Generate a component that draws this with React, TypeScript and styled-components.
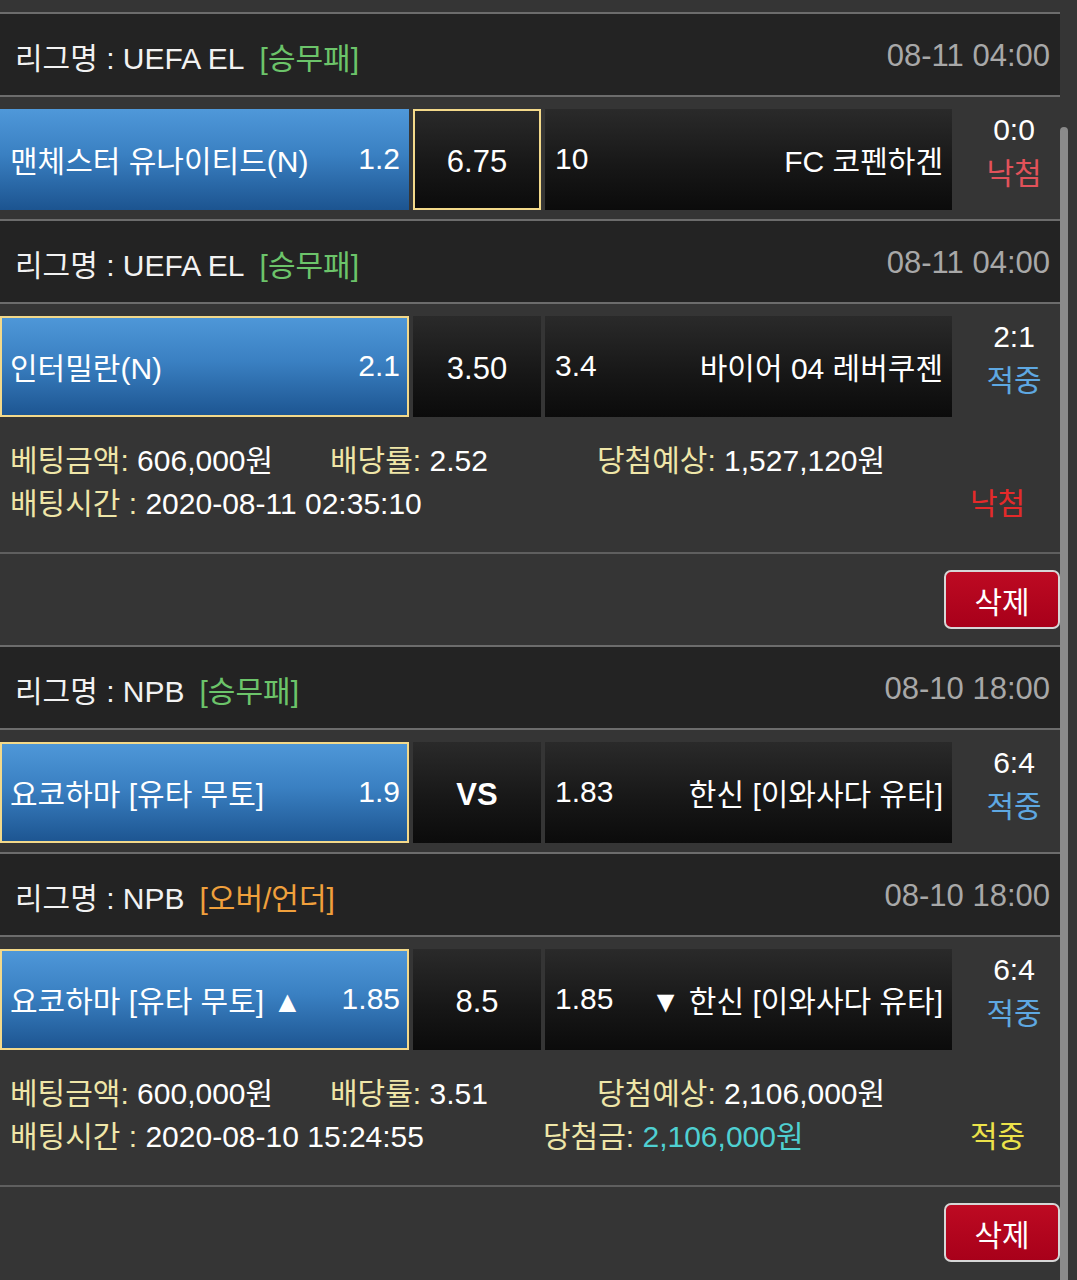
import styled, { createGlobalStyle } from 'styled-components';

type Pick = 'home' | 'mid' | 'away';

interface Match {
  league: string;
  market: string;
  marketTone: 'green' | 'orange';
  date: string;
  home: string;
  homeOdds: string;
  mid: string;
  midBold?: boolean;
  awayOdds: string;
  away: string;
  pick: Pick;
  score: string;
  result: '낙첨' | '적중';
}

interface Bet {
  matches: Match[];
  amount: string;
  rate: string;
  expected: string;
  time: string;
  won?: string;
  status: '낙첨' | '적중';
}

const bets: Bet[] = [
  {
    matches: [
      {
        league: 'UEFA EL',
        market: '[승무패]',
        marketTone: 'green',
        date: '08-11 04:00',
        home: '맨체스터 유나이티드(N)',
        homeOdds: '1.2',
        mid: '6.75',
        awayOdds: '10',
        away: 'FC 코펜하겐',
        pick: 'mid',
        score: '0:0',
        result: '낙첨',
      },
      {
        league: 'UEFA EL',
        market: '[승무패]',
        marketTone: 'green',
        date: '08-11 04:00',
        home: '인터밀란(N)',
        homeOdds: '2.1',
        mid: '3.50',
        awayOdds: '3.4',
        away: '바이어 04 레버쿠젠',
        pick: 'home',
        score: '2:1',
        result: '적중',
      },
    ],
    amount: '606,000원',
    rate: '2.52',
    expected: '1,527,120원',
    time: '2020-08-11 02:35:10',
    status: '낙첨',
  },
  {
    matches: [
      {
        league: 'NPB',
        market: '[승무패]',
        marketTone: 'green',
        date: '08-10 18:00',
        home: '요코하마 [유타 무토]',
        homeOdds: '1.9',
        mid: 'VS',
        midBold: true,
        awayOdds: '1.83',
        away: '한신 [이와사다 유타]',
        pick: 'home',
        score: '6:4',
        result: '적중',
      },
      {
        league: 'NPB',
        market: '[오버/언더]',
        marketTone: 'orange',
        date: '08-10 18:00',
        home: '요코하마 [유타 무토] ▲',
        homeOdds: '1.85',
        mid: '8.5',
        awayOdds: '1.85',
        away: '▼ 한신 [이와사다 유타]',
        pick: 'home',
        score: '6:4',
        result: '적중',
      },
    ],
    amount: '600,000원',
    rate: '3.51',
    expected: '2,106,000원',
    time: '2020-08-10 15:24:55',
    won: '2,106,000원',
    status: '적중',
  },
];

export default function App() {
  return (
    <>
      <GlobalStyle />
      <Page>
        {bets.map((bet, i) => (
          <Card key={i}>
            {bet.matches.map((m, j) => (
              <div key={j}>
                <LeagueHeader>
                  <LeagueName>
                    리그명 : {m.league}
                    <Market $tone={m.marketTone}>{m.market}</Market>
                  </LeagueName>
                  <MatchDate>{m.date}</MatchDate>
                </LeagueHeader>
                <MatchRow>
                  <HomeCell $selected={m.pick === 'home'}>
                    <span>{m.home}</span>
                    <span>{m.homeOdds}</span>
                  </HomeCell>
                  <MidCell $selected={m.pick === 'mid'} $bold={m.midBold}>
                    {m.mid}
                  </MidCell>
                  <AwayCell $selected={m.pick === 'away'}>
                    <span>{m.awayOdds}</span>
                    <span>{m.away}</span>
                  </AwayCell>
                  <Score>
                    <div>{m.score}</div>
                    <Result $win={m.result === '적중'}>{m.result}</Result>
                  </Score>
                </MatchRow>
              </div>
            ))}
            <Info>
              <InfoLine>
                <Field $w={320}>
                  <Label>베팅금액:</Label> {bet.amount}
                </Field>
                <Field $w={267}>
                  <Label>배당률:</Label> {bet.rate}
                </Field>
                <Field>
                  <Label>당첨예상:</Label> {bet.expected}
                </Field>
              </InfoLine>
              <InfoLine>
                <Field $w={533}>
                  <Label>배팅시간 :</Label> {bet.time}
                </Field>
                <Field $w={427}>
                  {bet.won && (
                    <>
                      <Label>당첨금:</Label> <WonValue>{bet.won}</WonValue>
                    </>
                  )}
                </Field>
                <Status $win={bet.status === '적중'}>{bet.status}</Status>
              </InfoLine>
            </Info>
            <ActionBar>
              <DeleteButton>삭제</DeleteButton>
            </ActionBar>
          </Card>
        ))}
      </Page>
      <ScrollThumb />
    </>
  );
}

const GlobalStyle = createGlobalStyle`
  html, body {
    margin: 0;
    padding: 0;
    background: #353535;
  }
  body {
    font-family: 'Liberation Sans', 'Noto Sans CJK KR', sans-serif;
    color: #fff;
    font-size: 30px;
  }
  *, *::before, *::after {
    box-sizing: border-box;
  }
`;

const Page = styled.div`
  width: 1060px;
  padding-top: 12px;
`;

const Card = styled.section``;

const LeagueHeader = styled.div`
  height: 85px;
  display: flex;
  align-items: center;
  justify-content: space-between;
  padding: 3px 10px 0 15px;
  background: #232323;
  border-top: 2px solid #6c6c6c;
  border-bottom: 2px solid #6c6c6c;
  font-size: 30px;
`;

const LeagueName = styled.div`
  color: #f2f2f2;
  white-space: pre;
`;

const Market = styled.span<{ $tone: 'green' | 'orange' }>`
  margin-left: 15px;
  color: ${({ $tone }) => ($tone === 'green' ? '#6cc46a' : '#f0a03c')};
`;

const MatchDate = styled.div`
  color: #a8a8a8;
  font-size: 31px;
`;

const MatchRow = styled.div`
  display: grid;
  grid-template-columns: 409px 128px 407px 1fr;
  column-gap: 4px;
  padding: 12px 0 9px;
`;

const Cell = styled.div<{ $selected?: boolean }>`
  height: 101px;
  display: flex;
  align-items: center;
  font-size: 30px;
  white-space: pre;
  box-shadow: ${({ $selected }) => ($selected ? 'inset 0 0 0 2px #f3d98a' : 'none')};
`;

const HomeCell = styled(Cell)`
  justify-content: space-between;
  padding: 0 9px 2px 10px;
  background: linear-gradient(to bottom, #4f98d9 0%, #3a80c2 45%, #1c5490 100%);
`;

const MidCell = styled(Cell)<{ $bold?: boolean }>`
  justify-content: center;
  padding-top: 4px;
  background: linear-gradient(to bottom, #2a2a2a 0%, #161616 60%, #0b0b0b 100%);
  font-weight: ${({ $bold }) => ($bold ? 700 : 400)};
  font-size: 31px;
`;

const AwayCell = styled(Cell)`
  justify-content: space-between;
  padding: 0 9px 2px 10px;
  background: linear-gradient(to bottom, #2a2a2a 0%, #161616 60%, #0b0b0b 100%);
`;

const Score = styled.div`
  padding-left: 12px;
  text-align: center;
  font-size: 30px;
  line-height: 44px;
  margin-top: -1px;
`;

const Result = styled.div<{ $win: boolean }>`
  color: ${({ $win }) => ($win ? '#5ea8e2' : '#e2525a')};
`;

const Info = styled.div`
  padding: 13px 0 27px 10px;
  font-size: 30px;
  line-height: 43px;
`;

const InfoLine = styled.div`
  display: flex;
  white-space: pre;
`;

const Field = styled.span<{ $w?: number }>`
  flex: none;
  width: ${({ $w }) => ($w ? `${$w}px` : 'auto')};
`;

const Label = styled.span`
  color: #efe6a8;
`;

const WonValue = styled.span`
  color: #4fd0d2;
`;

const Status = styled.span<{ $win: boolean }>`
  color: ${({ $win }) => ($win ? '#ece24a' : '#e52a2a')};
`;

const ActionBar = styled.div`
  display: flex;
  justify-content: flex-end;
  padding: 16px 0 16px;
  border-top: 2px solid #5f5f5f;
`;

const DeleteButton = styled.button`
  width: 116px;
  height: 59px;
  border: 2px solid #d6d6d6;
  border-radius: 7px;
  background: linear-gradient(to bottom, #bd0a22 0%, #a8001a 100%);
  color: #fff;
  font-family: inherit;
  font-size: 30px;
  padding: 0;
`;

const ScrollThumb = styled.div`
  position: fixed;
  top: 127px;
  bottom: 0;
  left: 1060px;
  width: 8px;
  border-radius: 4px 4px 0 0;
  background: #8a8a8a;
`;
